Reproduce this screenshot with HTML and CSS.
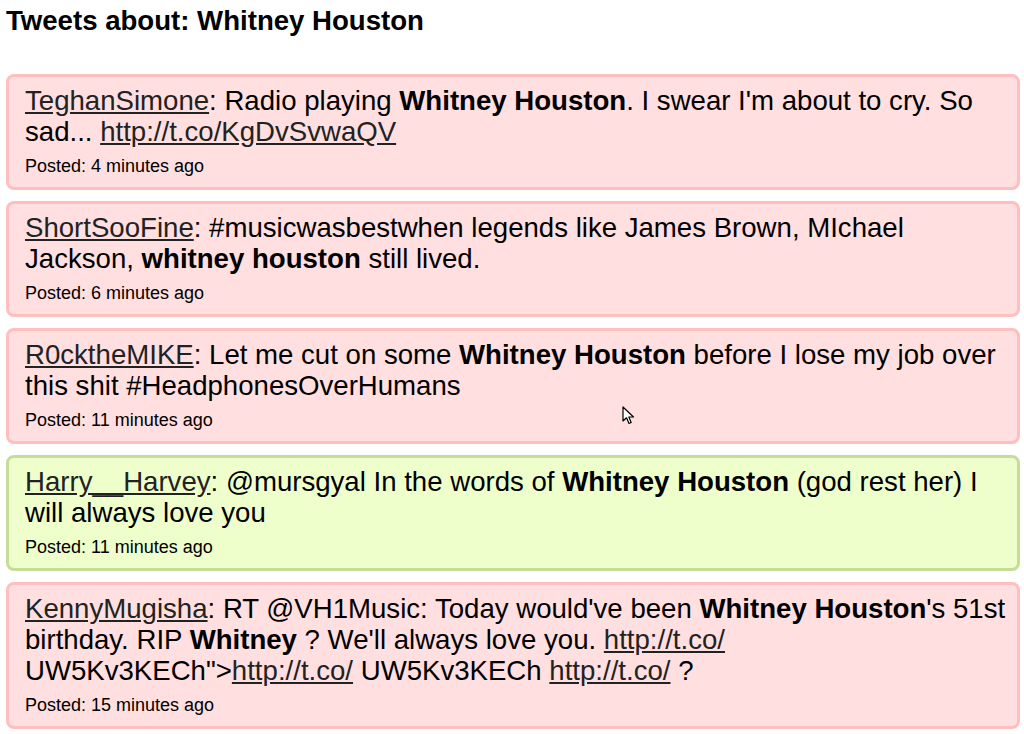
FILE: index.html
```html
<!DOCTYPE html>
<html lang="en">
<head>
  <meta charset="UTF-8" />
  <title>Tweets about: Whitney Houston</title>
  <link rel="stylesheet" href="styles.css">
</head>
<body>
  <h1>Tweets about: Whitney Houston</h1>

  <div class="tweets">
    <div class="tweet">
      <p class="text"><a href="#">TeghanSimone</a>: Radio playing <b>Whitney Houston</b>. I swear I'm about to cry. So sad... <a href="#">http://t.co/KgDvSvwaQV</a></p>
      <p class="posted">Posted: 4 minutes ago</p>
    </div>

    <div class="tweet">
      <p class="text"><a href="#">ShortSooFine</a>: #musicwasbestwhen legends like James Brown, MIchael Jackson, <b>whitney houston</b> still lived.</p>
      <p class="posted">Posted: 6 minutes ago</p>
    </div>

    <div class="tweet">
      <p class="text"><a href="#">R0cktheMIKE</a>: Let me cut on some <b>Whitney Houston</b> before I lose my job over this shit #HeadphonesOverHumans</p>
      <p class="posted">Posted: 11 minutes ago</p>
      <!-- mouse pointer caught in the screenshot -->
      <svg class="cursor" width="13" height="20" viewBox="0 0 13 20">
        <path d="M1 1 L1 15 L4.5 11.8 L7 17.5 L9.2 16.5 L6.8 11 L11.5 11 Z" fill="#fff" stroke="#000" stroke-width="1.2" stroke-linejoin="round"/>
      </svg>
    </div>

    <div class="tweet positive">
      <p class="text"><a href="#">Harry__Harvey</a>: @mursgyal In the words of <b>Whitney Houston</b> (god rest her) I will always love you</p>
      <p class="posted">Posted: 11 minutes ago</p>
    </div>

    <div class="tweet">
      <p class="text"><a href="#">KennyMugisha</a>: RT @VH1Music: Today would've been <b>Whitney Houston</b>'s 51st birthday. RIP <b>Whitney</b> ? We'll always love you. <a href="#">http://t.co/</a><br>UW5Kv3KECh"&gt;<a href="#">http://t.co/</a> UW5Kv3KECh <a href="#">http://t.co/</a> ?</p>
      <p class="posted">Posted: 15 minutes ago</p>
    </div>
  </div>
</body>
</html>
```

FILE: styles.css
```css
* { margin: 0; padding: 0; box-sizing: border-box; }

body {
  font-family: "Liberation Sans", Arial, sans-serif;
  color: #000;
  background: #fff;
  padding: 4.5px 4px 0 6px;
}

h1 {
  font-size: 27.6px;
  font-weight: bold;
  line-height: 32px;
  margin-bottom: 37.5px;
}

.tweets {
  display: flex;
  flex-direction: column;
  gap: 11px;
}

.tweet {
  position: relative;
  background-color: #ffdfdf;
  border: 3px solid #ffbfbf;
  border-radius: 8px;
  padding: 8px 9px 10.5px 16px;
}

.tweet.positive {
  background-color: #eeffcc;
  border-color: #c6dd99;
}

.text {
  font-size: 27.6px;
  line-height: 31px;
}

.text a {
  color: #222;
  text-decoration: underline;
}

.posted {
  font-size: 18px;
  line-height: 22px;
  margin-top: 7.5px;
}

.cursor {
  position: absolute;
  left: 613px;
  top: 75px;
}
```
